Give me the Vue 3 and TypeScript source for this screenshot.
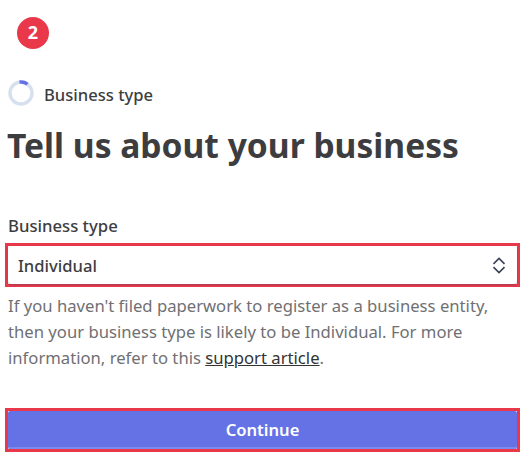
<script setup lang="ts">
const stepLabel: string = 'Business type'
</script>

<template>
  <main class="page">
    <div class="badge">2</div>
    <div class="step">
      <svg class="ring" width="26" height="26" viewBox="0 0 26 26" fill="none">
        <circle cx="13" cy="13" r="11" stroke="#d6e0ee" stroke-width="3.4" />
        <path d="M11.5 2.1 A11 11 0 0 1 19.5 4.1" stroke="#6472e6" stroke-width="3.4" />
      </svg>
      <span class="step-text">{{ stepLabel }}</span>
    </div>
    <h1>Tell us about your business</h1>
    <div class="label">Business type</div>
    <div class="outline">
      <div class="select">
        <span>Individual</span>
        <svg width="14" height="17" viewBox="0 0 14 17" fill="none" stroke="#3c4257" stroke-width="1.7">
          <path d="M1.5 6.8 7 1.5l5.5 5.3" />
          <path d="M1.5 10.2 7 15.5l5.5-5.3" />
        </svg>
      </div>
    </div>
    <p class="help">
      <span>If you haven't filed paperwork to register as a business entity,</span>
      <span>then your business type is likely to be Individual. For more</span>
      <span class="last"><span>information, refer to this&nbsp;</span><a href="#" @click.prevent>support article</a><span>.</span></span>
    </p>
    <div class="outline action">
      <button type="button">Continue</button>
    </div>
  </main>
</template>

<style scoped>
.page {
  width: 522px;
  height: 467px;
  box-sizing: border-box;
  padding: 17px 2px 0 5px;
  font-family: "Noto Sans", "Open Sans", sans-serif;
  color: #3d3d3f;
  background: #fff;
  overflow: hidden;
}
.badge {
  width: 32px;
  height: 32px;
  margin-left: 12px;
  border-radius: 50%;
  background: #e8384a;
  color: #fff;
  font-size: 18px;
  font-weight: 700;
  line-height: 31px;
  text-align: center;
}
.step {
  display: flex;
  align-items: center;
  gap: 10px;
  margin-top: 30px;
  margin-left: 3px;
  height: 28px;
  font-size: 16.6px;
  font-weight: 500;
}
.step-text {
  margin-top: 2px;
}
h1 {
  margin: 16px 0 0 2px;
  font-size: 33.6px;
  line-height: 44px;
  font-weight: 700;
  color: #3d3d3f;
  white-space: nowrap;
}
.label {
  margin: 47px 0 0 3px;
  font-size: 16.7px;
  font-weight: 500;
  line-height: 24px;
}
.outline {
  margin-top: 5px;
  height: 44px;
  box-sizing: border-box;
  border: 3px solid #e8384a;
}
.select {
  height: 100%;
  box-sizing: border-box;
  display: flex;
  align-items: center;
  justify-content: space-between;
  padding: 1px 11px 0 10px;
  border-radius: 4px;
  box-shadow: 0 1px 2px rgba(60, 66, 87, 0.4);
  font-size: 16.6px;
  font-weight: 500;
}
.select svg {
  margin-top: -1px;
}
.help {
  margin: 6px 0 0 3px;
  font-size: 16.67px;
  line-height: 26px;
  color: #6f7073;
}
.help > span {
  display: block;
  white-space: nowrap;
}
.help a {
  color: #333;
  text-decoration: underline;
}
.action {
  margin-top: 37px;
}
button {
  display: block;
  width: 100%;
  height: 100%;
  border: 0;
  padding: 0 0 2px;
  border-radius: 2px;
  background: #6472e6;
  box-shadow: inset 0 -2px 0 #7d89ee;
  color: #fff;
  font-family: inherit;
  font-size: 16.6px;
  font-weight: 600;
}
</style>
